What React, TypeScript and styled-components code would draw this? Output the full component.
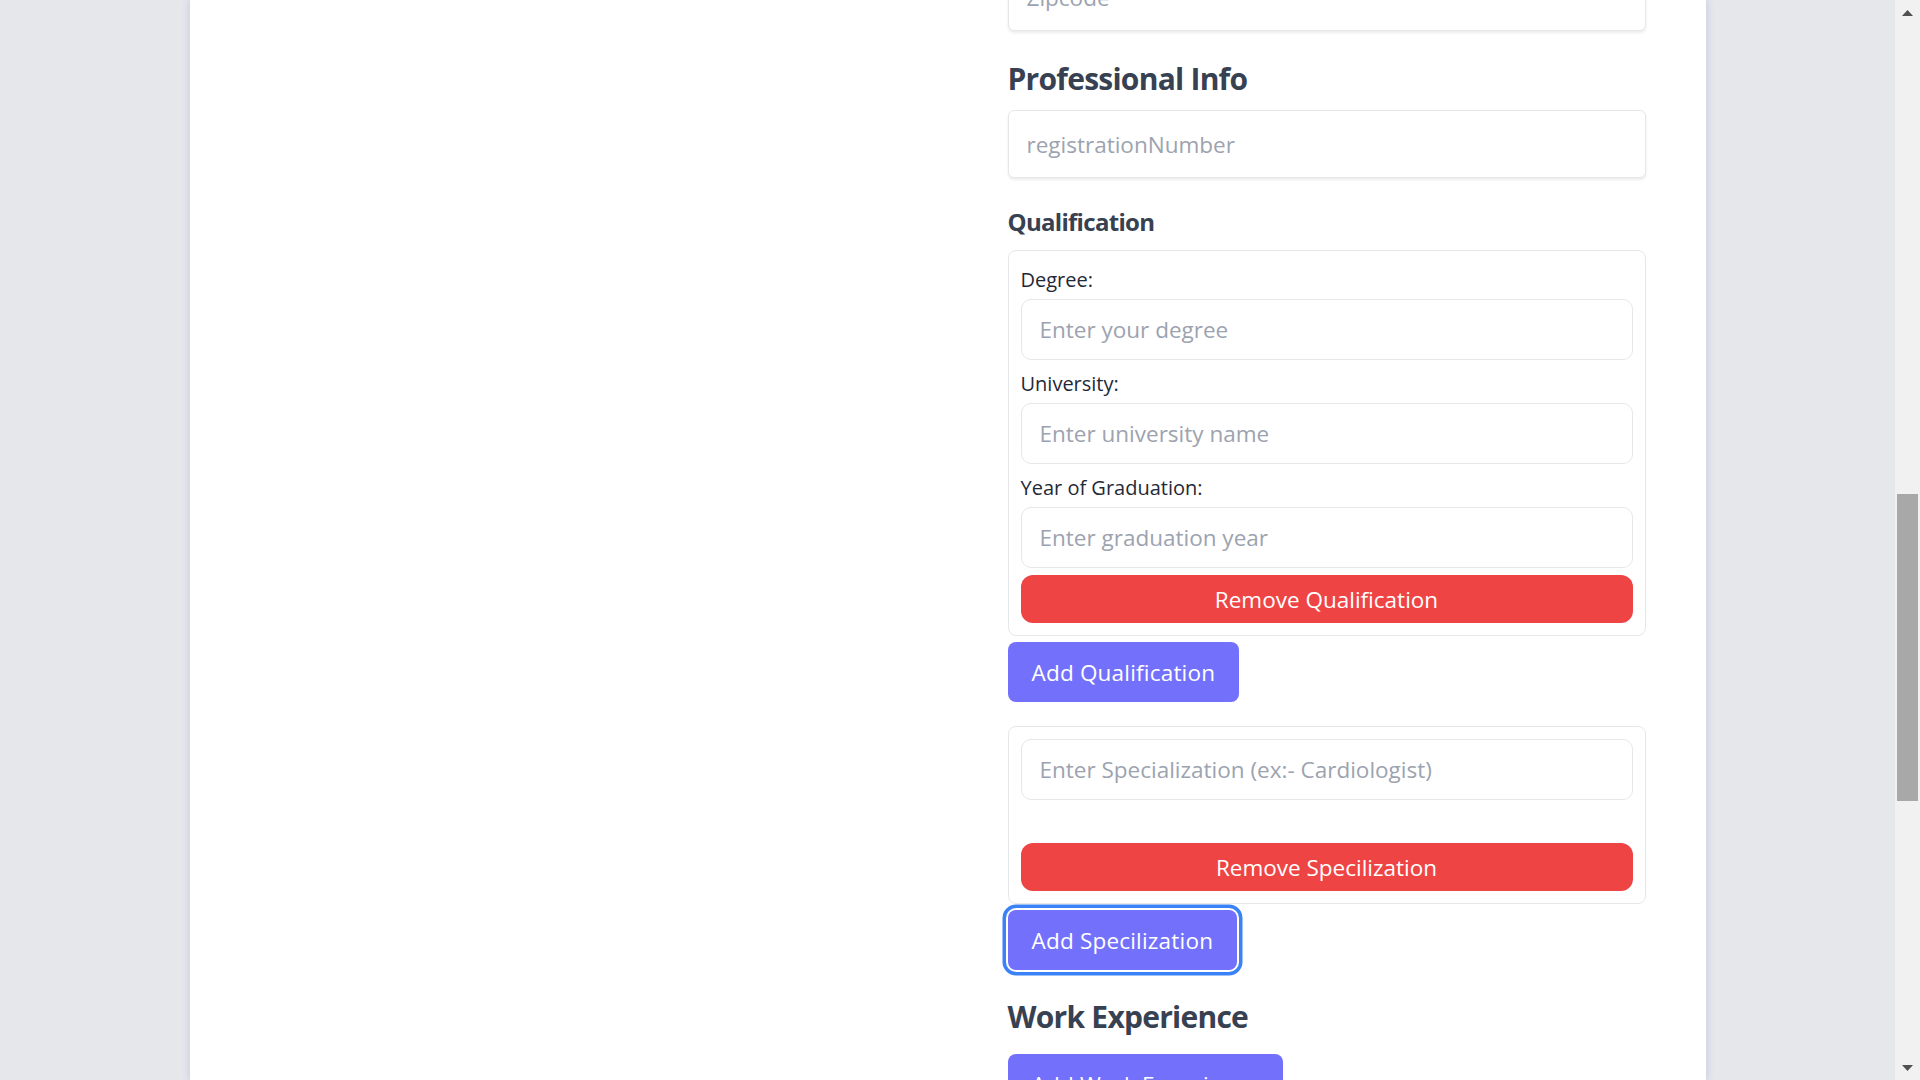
import React from "react";
import styled, { createGlobalStyle, css } from "styled-components";

const Global = createGlobalStyle`
  html, body { margin: 0; padding: 0; height: 100%; overflow: hidden; }
  body { font-family: "Open Sans", "Noto Sans", sans-serif; }
  #root { height: 100vh; }
  * { box-sizing: border-box; }
`;

const Page = styled.div`
  display: flex;
  height: 100vh;
  width: 100vw;
  overflow: hidden;
`;

const Main = styled.main`
  flex: 1;
  background: #e5e7eb;
  overflow: hidden;
  display: flex;
  justify-content: center;
`;

const Card = styled.div`
  width: 1516px;
  min-height: 100%;
  background: #ffffff;
  box-shadow: 0 0 8px rgba(96, 118, 196, 0.28);
  padding: 0 60px;
  display: grid;
  grid-template-columns: 638px 638px;
  column-gap: 120px;
  align-content: start;
`;

const Side = styled.div``;

const FormCol = styled.div`
  display: flex;
  flex-direction: column;
  align-items: stretch;
  margin-top: -37px;
`;

const TopInput = styled.input`
  height: 68px;
  width: 100%;
  border: 1px solid #e5e7eb;
  border-radius: 6px;
  box-shadow: 0 2px 3px rgba(0, 0, 0, 0.08);
  padding: 0 18px;
  font: inherit;
  font-size: 22.5px;
  color: #111827;
  background: #fff;
  outline: none;
  &::placeholder { color: #9ca3af; }
`;

const Heading = styled.h2<{ $top: number; $bottom: number }>`
  margin: ${(p) => p.$top}px 0 ${(p) => p.$bottom}px;
  font-size: 30px;
  line-height: 36px;
  font-weight: 700;
  letter-spacing: -0.75px;
  color: #374151;
`;

const SubHeading = styled.h3`
  margin: 29px 0 14px;
  font-size: 24px;
  line-height: 29px;
  font-weight: 700;
  letter-spacing: -0.7px;
  color: #374151;
`;

const Box = styled.div<{ $top?: number }>`
  margin-top: ${(p) => p.$top ?? 0}px;
  border: 1px solid #e5e7eb;
  border-radius: 8px;
  padding: 12px;
  display: flex;
  flex-direction: column;
`;

const Label = styled.label`
  display: block;
  font-size: 20px;
  line-height: 30px;
  padding-top: 2px;
  color: #1f2937;
  margin-bottom: 4px;
`;

const FieldInput = styled.input<{ $gap?: number }>`
  height: 61px;
  width: 100%;
  border: 1px solid #e5e7eb;
  border-radius: 10px;
  padding: 0 18px;
  font: inherit;
  font-size: 22.5px;
  color: #111827;
  background: #fff;
  outline: none;
  margin-bottom: ${(p) => p.$gap ?? 7}px;
  &::placeholder { color: #9ca3af; }
`;

const RemoveButton = styled.button`
  height: 48px;
  width: 100%;
  border: none;
  border-radius: 12px;
  background: #ef4444;
  color: #ffffff;
  font: inherit;
  font-size: 22.5px;
  cursor: pointer;
`;

const AddButton = styled.button<{ $focused?: boolean; $top: number }>`
  align-self: flex-start;
  height: 60px;
  margin-top: ${(p) => p.$top}px;
  padding: 0 24px;
  border: none;
  border-radius: 8px;
  background: #7371fc;
  color: #ffffff;
  font: inherit;
  font-size: 22.5px;
  letter-spacing: 0.2px;
  cursor: pointer;
  ${(p) =>
    p.$focused &&
    css`
      box-shadow: 0 0 0 2px #ffffff, 0 0 0 5.5px #3b82f6;
    `}
`;

const Scrollbar = styled.div`
  width: 25px;
  height: 100vh;
  background: #f1f1f1;
  display: flex;
  flex-direction: column;
`;

const ArrowCell = styled.div`
  height: 25px;
  display: flex;
  align-items: center;
  justify-content: center;
`;

const Track = styled.div`
  flex: 1;
  padding: 469px 2px 0;
`;

const Thumb = styled.div`
  height: 307px;
  background: #a8a8a8;
`;

const Arrow = ({ up }: { up?: boolean }) => (
  <svg width="11" height="6" viewBox="0 0 11 6">
    {up ? <polygon points="0,6 5.5,0 11,6" fill="#505050" /> : <polygon points="0,0 5.5,6 11,0" fill="#505050" />}
  </svg>
);

export default function App() {
  return (
    <>
      <Global />
      <Page>
        <Main>
          <Card>
            <Side />
            <FormCol>
              <TopInput placeholder="Zipcode" />
              <Heading $top={30} $bottom={13}>Professional Info</Heading>
              <TopInput placeholder="registrationNumber" />
              <SubHeading>Qualification</SubHeading>
              <Box>
                <Label>Degree:</Label>
                <FieldInput placeholder="Enter your degree" />
                <Label>University:</Label>
                <FieldInput placeholder="Enter university name" />
                <Label>Year of Graduation:</Label>
                <FieldInput placeholder="Enter graduation year" />
                <RemoveButton>Remove Qualification</RemoveButton>
              </Box>
              <AddButton $top={6}>Add Qualification</AddButton>
              <Box $top={24}>
                <FieldInput placeholder="Enter Specialization (ex:- Cardiologist)" $gap={43} />
                <RemoveButton>Remove Specilization</RemoveButton>
              </Box>
              <AddButton $top={6} $focused>Add Specilization</AddButton>
              <Heading $top={29} $bottom={19}>Work Experience</Heading>
              <AddButton $top={0}>Add Work Experience</AddButton>
            </FormCol>
          </Card>
        </Main>
        <Scrollbar>
          <ArrowCell><Arrow up /></ArrowCell>
          <Track><Thumb /></Track>
          <ArrowCell><Arrow /></ArrowCell>
        </Scrollbar>
      </Page>
    </>
  );
}
